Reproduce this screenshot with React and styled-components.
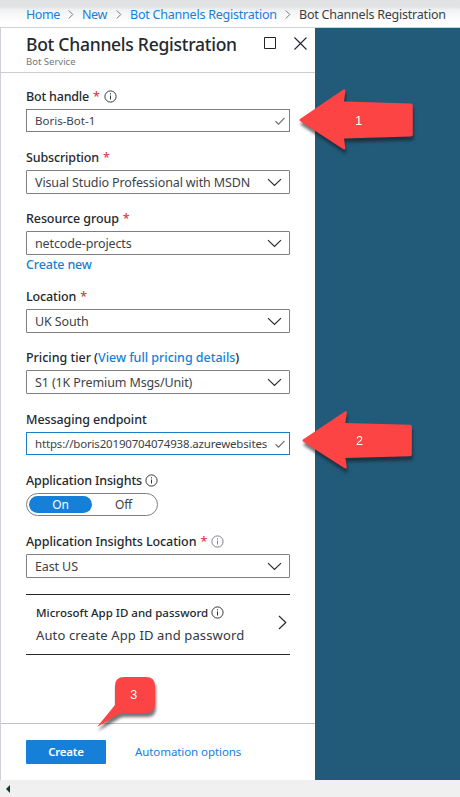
import React from 'react';
import styled, { createGlobalStyle } from 'styled-components';

const Global = createGlobalStyle`
  *, *::before, *::after { box-sizing: border-box; }
  body {
    margin: 0;
    overflow: hidden;
    font-family: "Noto Sans", "Open Sans", sans-serif;
    font-size: 12.5px;
    color: #24292f;
    background: #fff;
  }
`;

const Screen = styled.div`
  position: relative;
  display: flex;
  flex-direction: column;
  width: 460px;
  height: 797px;
  overflow: hidden;
`;

const Breadcrumb = styled.nav`
  flex: none;
  display: flex;
  align-items: center;
  height: 28px;
  padding: 2px 0 0 26px;
  border-bottom: 1px solid #cfd1d4;
  background: linear-gradient(#e1e3e5 0 7px, #f1f2f3 10px, #fff 22px);
  white-space: nowrap;
`;

const Crumb = styled.span`
  width: ${(p) => p.$w}px;
  letter-spacing: ${(p) => p.$ls || -0.22}px;
  color: ${(p) => (p.$current ? '#3b3f45' : '#1580d9')};
`;

const CrumbGap = styled.span`
  display: flex;
  justify-content: center;
  width: ${(p) => p.$w}px;
`;

const Main = styled.div`
  flex: 1;
  display: flex;
  min-height: 0;
`;

const Blade = styled.section`
  display: flex;
  flex-direction: column;
  width: 315px;
  border-left: 1px solid #d0d1d8;
  background: #fff;
`;

const Backdrop = styled.div`
  flex: 1;
  background: #225a7a;
`;

const BladeHeader = styled.header`
  flex: none;
  display: flex;
  justify-content: space-between;
  height: 45px;
  padding: 4px 8px 0 25px;
  border-bottom: 1px solid #cccdd0;
`;

const Title = styled.h1`
  margin: 0;
  font-size: 17.5px;
  font-weight: 500;
  line-height: 24px;
  letter-spacing: -0.26px;
  white-space: nowrap;
`;

const Subtitle = styled.div`
  font-size: 9.5px;
  line-height: 12px;
  color: #74777c;
`;

const WindowButtons = styled.div`
  display: flex;
  gap: 17px;
  height: 22px;
  align-items: center;
`;

const Form = styled.div`
  flex: 1;
  padding: 14px 25px 0;
`;

const Field = styled.div`
  margin-bottom: ${(p) => p.$gap || 15}px;
`;

const Label = styled.div`
  display: flex;
  align-items: center;
  height: 18px;
  margin-bottom: 4px;
  font-weight: 500;
  letter-spacing: ${(p) => p.$ls ?? -0.14}px;
  white-space: pre;
`;

const Required = styled.span`
  width: 15px;
  padding-left: 4px;
  color: #d73c3f;
`;

const LinkText = styled.a`
  color: #1580d9;
`;

const Box = styled.div`
  display: flex;
  align-items: center;
  justify-content: space-between;
  width: 264px;
  height: ${(p) => (p.$input ? 23 : 24)}px;
  padding: 0 ${(p) => (p.$input ? 4 : 7)}px 0 8px;
  border: 1px solid ${(p) => (p.$focused ? '#1a7fcb' : '#7f7d84')};
  border-radius: ${(p) => (p.$input ? 0 : 1)}px;
  font-size: ${(p) => (p.$input ? 11.5 : 12.5)}px;
  letter-spacing: ${(p) => p.$ls ?? -0.12}px;
  color: #3d4248;
  white-space: nowrap;
`;

const CreateNew = styled(LinkText)`
  display: block;
  height: 17px;
  line-height: 20px;
  font-weight: 500;
  letter-spacing: -0.16px;
`;

const Toggle = styled.div`
  display: flex;
  width: 132px;
  height: 23px;
  padding: 2px;
  border: 1px solid #7f7d84;
  border-radius: 12px;
`;

const ToggleOption = styled.span`
  display: flex;
  align-items: center;
  justify-content: center;
  width: 63px;
  height: 17px;
  border-radius: 9px;
  font-size: 12px;
  letter-spacing: -0.2px;
  background: ${(p) => (p.$on ? '#1680d9' : 'transparent')};
  color: ${(p) => (p.$on ? '#fff' : '#3b3f45')};
`;

const Selector = styled.div`
  display: flex;
  align-items: center;
  justify-content: space-between;
  width: 264px;
  height: 61px;
  padding: 0 3px 5px 10px;
  border: solid #25282c;
  border-width: 1px 0;
`;

const SelectorTitle = styled.div`
  display: flex;
  align-items: center;
  gap: 3px;
  height: 21px;
  margin-top: 3px;
  font-size: 11.5px;
  font-weight: 500;
`;

const SelectorValue = styled.div`
  height: 23px;
  line-height: 24px;
  font-size: 13px;
  letter-spacing: 0.13px;
  color: #33383e;
`;

const Footer = styled.footer`
  flex: none;
  display: flex;
  align-items: center;
  gap: 29px;
  height: 57px;
  padding: 0 0 1px 25px;
  border-top: 1px solid #c0c2c5;
  font-size: 11.5px;
`;

const CreateButton = styled.button`
  width: 80px;
  height: 24px;
  padding: 0;
  border: 0;
  border-radius: 1px;
  font: 600 11.5px/24px "Noto Sans", sans-serif;
  letter-spacing: -0.25px;
  color: #fff;
  background: #1680d9;
`;

const Automation = styled(LinkText)`
  letter-spacing: -0.08px;
`;

const ScrollTrack = styled.div`
  flex: none;
  display: flex;
  align-items: center;
  height: 17px;
  padding-left: 6px;
  background: #f0f0f1;
`;

const Callout = styled.svg`
  position: absolute;
  left: ${(p) => p.$x}px;
  top: ${(p) => p.$y}px;
  overflow: visible;
  filter: drop-shadow(1px 4px 1.5px rgba(25, 25, 30, 0.6));
  font-family: "Liberation Sans", sans-serif;
  font-size: 13px;
`;

const Info = ({ color = '#34373b' }) => (
  <svg width="13" height="13" viewBox="0 0 13 13" fill="none" stroke={color}>
    <circle cx="6.5" cy="6.5" r="5.6" />
    <path d="M6.5 5.5v4M6.5 3.2v1.2" />
  </svg>
);

const Chevron = () => (
  <svg width="15" height="9" viewBox="0 0 15 9" fill="none" stroke="#25282c" strokeWidth="1.15">
    <path d="M1 1.2l6.5 6.3L14 1.2" />
  </svg>
);

const Check = () => (
  <svg width="10" height="8" viewBox="0 0 10 8" fill="none" stroke="#66696d" strokeWidth="1.1">
    <path d="M.5 4.2l3 3L9.5 .8" />
  </svg>
);

const Separator = ({ w }) => (
  <CrumbGap $w={w}>
    <svg width="6" height="9" viewBox="0 0 6 9" fill="none" stroke="#77797d">
      <path d="M.8.5l4 4-4 4" />
    </svg>
  </CrumbGap>
);

const Select = ({ children }) => (
  <Box>
    {children}
    <Chevron />
  </Box>
);

const Arrow = ({ x, y, w = 115, h = 62, label }) => (
  <Callout $x={x} $y={y} width={w} height={h} viewBox="0 0 115 62" preserveAspectRatio="none">
    <path
      d="M1 30L44 .8q3-1.4 2.3 1.6L45 12.5l67 2q1.8.2 1.8 2v29q0 2-1.8 2L45 49.5l1.3 9q.3 3-2.6 1.3L1 32Q0 31 1 30z"
      fill="#fc4444"
    />
    <text x="56" y="35.5" fill="#fff">{label}</text>
  </Callout>
);

export default function App() {
  return (
    <Screen>
      <Global />
      <Breadcrumb>
        <Crumb $w={34} $ls={-0.4}>Home</Crumb>
        <Separator w={22} />
        <Crumb $w={25} $ls={-0.4}>New</Crumb>
        <Separator w={23} />
        <Crumb $w={147}>Bot Channels Registration</Crumb>
        <Separator w={22} />
        <Crumb $w={148} $current>Bot Channels Registration</Crumb>
      </Breadcrumb>
      <Main>
        <Blade>
          <BladeHeader>
            <div>
              <Title>Bot Channels Registration</Title>
              <Subtitle>Bot Service</Subtitle>
            </div>
            <WindowButtons>
              <svg width="13" height="13" fill="none" stroke="#222529">
                <path d="M.5 .5h11v11H.5z" />
              </svg>
              <svg width="13" height="13" fill="none" stroke="#222529" strokeWidth="1.1">
                <path d="M.5.5l12 12M12.5.5l-12 12" />
              </svg>
            </WindowButtons>
          </BladeHeader>
          <Form>
            <Field $gap={16}>
              <Label $ls={-0.2}>Bot handle<Required>*</Required><Info /></Label>
              <Box $input $ls={0}>Boris-Bot-1<Check /></Box>
            </Field>
            <Field>
              <Label>Subscription<Required>*</Required></Label>
              <Select>Visual Studio Professional with MSDN</Select>
            </Field>
            <Field>
              <Label $ls={-0.1}>Resource group<Required>*</Required></Label>
              <Select>netcode-projects</Select>
              <CreateNew>Create new</CreateNew>
            </Field>
            <Field>
              <Label>Location<Required>*</Required></Label>
              <Select>UK South</Select>
            </Field>
            <Field $gap={16}>
              <Label $ls={-0.03}>Pricing tier (<LinkText>View full pricing details</LinkText>)</Label>
              <Select>S1 (1K Premium Msgs/Unit)</Select>
            </Field>
            <Field $gap={16}>
              <Label $ls={-0.08}>Messaging endpoint</Label>
              <Box $input $focused $ls={-0.17}>https://boris20190704074938.azurewebsites<Check /></Box>
            </Field>
            <Field $gap={16}>
              <Label>Application Insights <Info /></Label>
              <Toggle>
                <ToggleOption $on>On</ToggleOption>
                <ToggleOption>Off</ToggleOption>
              </Toggle>
            </Field>
            <Field $gap={16}>
              <Label $ls={-0.1}>Application Insights Location<Required>*</Required><Info color="#808287" /></Label>
              <Select>East US</Select>
            </Field>
            <Selector>
              <div>
                <SelectorTitle>Microsoft App ID and password<Info /></SelectorTitle>
                <SelectorValue>Auto create App ID and password</SelectorValue>
              </div>
              <svg width="9" height="15" viewBox="0 0 9 15" fill="none" stroke="#25282c" strokeWidth="1.15">
                <path d="M1 1l6.8 6.5L1 14" />
              </svg>
            </Selector>
          </Form>
          <Footer>
            <CreateButton>Create</CreateButton>
            <Automation>Automation options</Automation>
          </Footer>
        </Blade>
        <Backdrop />
      </Main>
      <ScrollTrack>
        <svg width="4" height="8"><path d="M4 0v8L0 4z" fill="#15323f" /></svg>
      </ScrollTrack>
      <Arrow x={299} y={89} label="1" />
      <Arrow x={302} y={411} w={111} h={59} label="2" />
      <Callout $x={97} $y={677} width="58" height="50">
        <path
          d="M27 0h22q9 0 9 9v18q0 9-9 9H27l-4 .5L0 50l18-22V9q0-9 9-9z"
          fill="#fc4444"
        />
        <text x="33" y="22" fill="#fff">3</text>
      </Callout>
    </Screen>
  );
}
